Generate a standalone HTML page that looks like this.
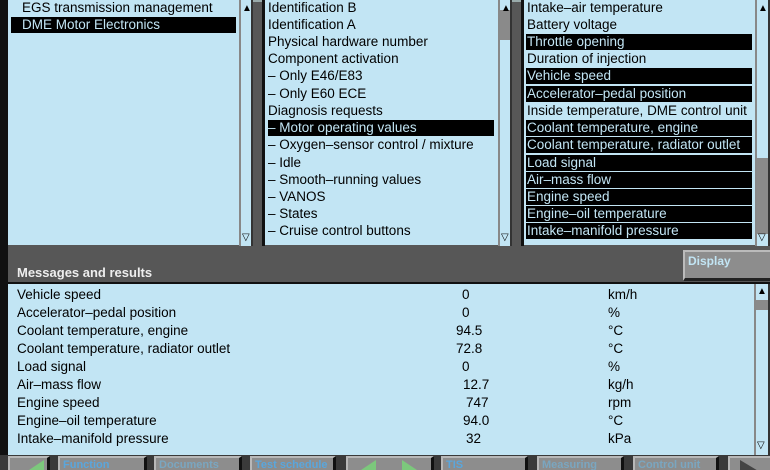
<!DOCTYPE html>
<html><head><meta charset="utf-8"><style>
*{margin:0;padding:0;box-sizing:border-box}
html,body{width:770px;height:470px;overflow:hidden}
body{background:#575757;font-family:"Liberation Sans",Arial,sans-serif;font-size:13.5px;color:#000;position:relative}
.a{position:absolute}
.p{position:absolute;background:#c2e5f4}
.r{position:absolute;height:16px;line-height:16px;white-space:nowrap}
.s{background:#000;color:#c2e5f4}
.sb{position:absolute;background:#c2e5f4;border-left:2px solid #888;border-right:2px solid #333}
.btn{position:absolute;top:456px;height:16px;background:#8d8d8d;border-top:2px solid #b8b8b8;border-left:2px solid #b8b8b8;border-right:3px solid #111;font-weight:bold;font-size:11px;line-height:14px;padding-left:3px;color:#5aa6dc;white-space:nowrap;overflow:hidden}
.dim{color:#7aa6c0}
</style></head><body>
<div class="a" style="left:0;top:0;width:8px;height:470px;background:#111"></div>
<div class="a" style="left:8px;top:0;width:762px;height:2px;background:#9aa"></div>
<!-- left panel -->
<div class="p" style="left:8px;top:0;width:231px;height:245px"></div>
<div class="r" style="left:22px;top:0px">EGS transmission management</div>
<div class="r s" style="left:11px;top:17px;width:225px;padding-left:11px">DME Motor Electronics</div>
<div class="sb" style="left:239px;top:0;width:14px;height:246px"></div>
<div class="a" style="left:242px;top:3px;font-size:10px">▲</div>
<div class="a" style="left:242px;top:232px;font-size:10px">▽</div>
<!-- middle panel -->
<div class="a" style="left:262px;top:0;width:3px;height:246px;background:#111"></div>
<div class="p" style="left:265px;top:0;width:233px;height:245px"></div>
<div class="r" style="left:268px;top:0px">Identification B</div>
<div class="r" style="left:268px;top:17px">Identification A</div>
<div class="r" style="left:268px;top:34px">Physical hardware number</div>
<div class="r" style="left:268px;top:51px">Component activation</div>
<div class="r" style="left:268px;top:68px">– Only E46/E83</div>
<div class="r" style="left:268px;top:86px">– Only E60 ECE</div>
<div class="r" style="left:268px;top:103px">Diagnosis requests</div>
<div class="r s" style="left:268px;top:120px;width:226px">– Motor operating values</div>
<div class="r" style="left:268px;top:137px">– Oxygen–sensor control / mixture</div>
<div class="r" style="left:268px;top:155px">– Idle</div>
<div class="r" style="left:268px;top:172px">– Smooth–running values</div>
<div class="r" style="left:268px;top:189px">– VANOS</div>
<div class="r" style="left:268px;top:206px">– States</div>
<div class="r" style="left:268px;top:223px">– Cruise control buttons</div>
<div class="sb" style="left:498px;top:0;width:14px;height:246px"></div>
<div class="a" style="left:500px;top:10px;width:10px;height:30px;background:#8a8a8a"></div>
<div class="a" style="left:501px;top:3px;font-size:10px">▲</div>
<div class="a" style="left:501px;top:232px;font-size:10px">▽</div>
<!-- right panel -->
<div class="a" style="left:521px;top:0;width:3px;height:246px;background:#111"></div>
<div class="p" style="left:524px;top:0;width:231px;height:245px"></div>
<div class="r" style="left:527px;top:0px">Intake–air temperature</div>
<div class="r" style="left:527px;top:17px">Battery voltage</div>
<div class="r s" style="left:526px;top:34px;width:226px;padding-left:1px">Throttle opening</div>
<div class="r" style="left:527px;top:51px">Duration of injection</div>
<div class="r s" style="left:526px;top:68px;width:226px;padding-left:1px">Vehicle speed</div>
<div class="r s" style="left:526px;top:86px;width:226px;padding-left:1px">Accelerator–pedal position</div>
<div class="r" style="left:527px;top:103px">Inside temperature, DME control unit</div>
<div class="r s" style="left:526px;top:120px;width:226px;padding-left:1px">Coolant temperature, engine</div>
<div class="r s" style="left:526px;top:137px;width:226px;padding-left:1px">Coolant temperature, radiator outlet</div>
<div class="r s" style="left:526px;top:155px;width:226px;padding-left:1px">Load signal</div>
<div class="r s" style="left:526px;top:172px;width:226px;padding-left:1px">Air–mass flow</div>
<div class="r s" style="left:526px;top:189px;width:226px;padding-left:1px">Engine speed</div>
<div class="r s" style="left:526px;top:206px;width:226px;padding-left:1px">Engine–oil temperature</div>
<div class="r s" style="left:526px;top:223px;width:226px;padding-left:1px">Intake–manifold pressure</div>
<div class="sb" style="left:755px;top:0;width:15px;height:246px"></div>
<div class="a" style="left:757px;top:158px;width:11px;height:76px;background:#8a8a8a"></div>
<div class="a" style="left:758px;top:3px;font-size:10px">▲</div>
<div class="a" style="left:758px;top:232px;font-size:10px">▽</div>
<!-- messages -->
<div class="a" style="left:17px;top:265px;color:#eee;font-weight:bold;font-size:13px">Messages and results</div>
<div class="a" style="left:683px;top:250px;width:87px;height:31px;background:#8d8d8d;border-top:2px solid #bbb;border-left:2px solid #bbb;border-bottom:3px solid #222;color:#c2e5f4;font-weight:bold;font-size:12px;padding:2px 0 0 3px">Display</div>
<div class="a" style="left:8px;top:282px;width:762px;height:2px;background:#111"></div>
<div class="p" style="left:8px;top:284px;width:746px;height:171px"></div>
<div class="sb" style="left:754px;top:284px;width:16px;height:172px"></div>
<div class="a" style="left:756px;top:300px;width:12px;height:10px;background:#8a8a8a"></div>
<div class="a" style="left:757px;top:286px;font-size:10px">▲</div>
<div class="a" style="left:757px;top:440px;font-size:10px">▽</div>
<div class="r" style="left:17px;top:287px">Vehicle speed</div><div class="r" style="left:462px;top:287px">0</div><div class="r" style="left:608px;top:287px">km/h</div>
<div class="r" style="left:17px;top:305px">Accelerator–pedal position</div><div class="r" style="left:462px;top:305px">0</div><div class="r" style="left:608px;top:305px">%</div>
<div class="r" style="left:17px;top:323px">Coolant temperature, engine</div><div class="r" style="left:456px;top:323px">94.5</div><div class="r" style="left:608px;top:323px">°C</div>
<div class="r" style="left:17px;top:341px">Coolant temperature, radiator outlet</div><div class="r" style="left:456px;top:341px">72.8</div><div class="r" style="left:608px;top:341px">°C</div>
<div class="r" style="left:17px;top:359px">Load signal</div><div class="r" style="left:462px;top:359px">0</div><div class="r" style="left:608px;top:359px">%</div>
<div class="r" style="left:17px;top:377px">Air–mass flow</div><div class="r" style="left:463px;top:377px">12.7</div><div class="r" style="left:608px;top:377px">kg/h</div>
<div class="r" style="left:17px;top:395px">Engine speed</div><div class="r" style="left:466px;top:395px">747</div><div class="r" style="left:608px;top:395px">rpm</div>
<div class="r" style="left:17px;top:413px">Engine–oil temperature</div><div class="r" style="left:463px;top:413px">94.0</div><div class="r" style="left:608px;top:413px">°C</div>
<div class="r" style="left:17px;top:431px">Intake–manifold pressure</div><div class="r" style="left:466px;top:431px">32</div><div class="r" style="left:608px;top:431px">kPa</div>
<!-- bottom bar -->
<div class="a" style="left:0;top:455px;width:770px;height:15px;background:#3a3a3a"></div>
<div class="btn" style="left:8px;width:42px"><svg width="30" height="14" style="position:absolute;left:6px;top:0"><polygon points="28,2 28,14 10,14" fill="#7cc87c"/></svg></div>
<div class="btn" style="left:58px;width:89px">Function</div>
<div class="btn dim" style="left:154px;width:88px">Documents</div>
<div class="btn" style="left:250px;width:86px">Test schedule</div>
<div class="btn" style="left:346px;width:88px"><svg width="80" height="14" style="position:absolute;left:2px;top:0"><polygon points="26,2 26,14 8,14" fill="#7cc87c"/><polygon points="52,2 52,14 70,14" fill="#7cc87c"/></svg></div>
<div class="btn" style="left:441px;width:87px">TIS</div>
<div class="btn dim" style="left:537px;width:87px">Measuring</div>
<div class="btn dim" style="left:633px;width:86px">Control unit</div>
<div class="btn" style="left:728px;width:42px;border-right:none"><svg width="30" height="14" style="position:absolute;left:6px;top:0"><polygon points="4,2 4,14 24,14" fill="#444"/></svg></div>
</body></html>
